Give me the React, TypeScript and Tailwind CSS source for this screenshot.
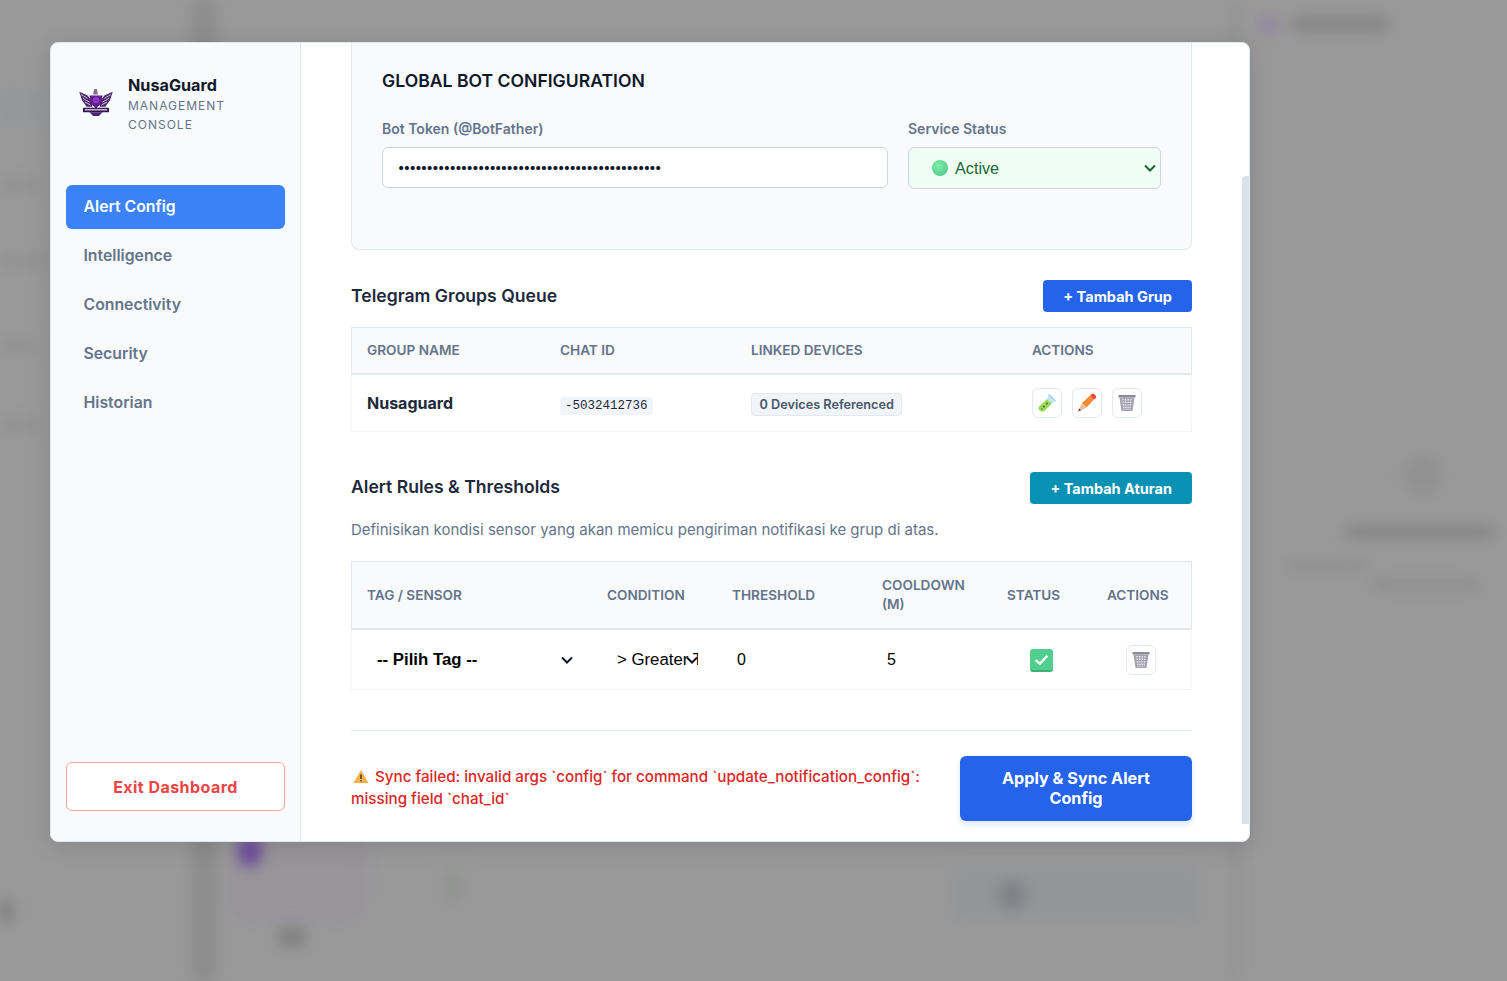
const navItems = ["Intelligence", "Connectivity", "Security", "Historian"];

function LogoMark() {
  return (
    <svg width="34" height="28" viewBox="0 0 36 30" className="shrink-0 blur-[0.3px]">
      <path d="M0 3 L9 7 L14 14 L14 19 L8 19 L3 12 Z" fill="#4a2a6b" />
      <path d="M36 3 L27 7 L22 14 L22 19 L28 19 L33 12 Z" fill="#4a2a6b" />
      <path d="M2 6 L9 10 M4 10 L11 14 M6 14 L12 17 M34 6 L27 10 M32 10 L25 14 M30 14 L24 17" stroke="#cfc4da" strokeWidth="1" />
      <path d="M16 0 L19 0 L20 6 L15 6 Z" fill="#7d708a" />
      <path d="M11 7 L25 7 L24 15 L18 21 L12 15 Z" fill="#5f1d8f" />
      <circle cx="18" cy="12" r="3.5" fill="#8a35c0" />
      <rect x="4" y="20" width="28" height="5" rx="1" fill="#35174f" />
      <rect x="6" y="21.5" width="24" height="1.5" fill="#cdbfdb" />
      <path d="M11 25 L25 25 L21 29 L15 29 Z" fill="#4b2070" />
    </svg>
  );
}

function TestTube() {
  return (
    <svg width="20" height="20" viewBox="0 0 20 20">
      <path d="M10 6 L15 10.5 L7.5 18 Q5 19.5 2.5 17.5 Q0.5 15 2.5 13 Z" fill="#9cd95c" />
      <path d="M10 6 L15 10.5 L17 9 L11.5 3.5 Z" fill="#bfe2f7" />
      <path d="M11 2.5 L12.5 1 L19 7.5 L17.5 9 Z" fill="#a6d4f2" />
      <circle cx="7" cy="13.5" r="1.1" fill="#3f7d2a" />
      <circle cx="10" cy="10.5" r="1.1" fill="#3f7d2a" />
      <circle cx="4.8" cy="16" r="0.8" fill="#3f7d2a" />
    </svg>
  );
}

function Pencil() {
  return (
    <svg width="20" height="20" viewBox="0 0 20 20">
      <path d="M5 10 L13 2.5 L17 6.5 L9.5 14.5 Z" fill="#f58a36" />
      <path d="M13 2.5 L15 1 Q16 0.5 17 1 L19 3 Q19.5 4 19 5 L17 6.5 Z" fill="#e8473f" />
      <path d="M5 10 L9.5 14.5 L3 18 L1.5 17 Z" fill="#ecc097" />
      <path d="M2.4 15.5 L4 17.3 L1 18.5 Z" fill="#5b3a2a" />
    </svg>
  );
}

function Wastebasket() {
  return (
    <svg width="18" height="18" viewBox="0 0 18 18">
      <rect x="0.5" y="1" width="17" height="2.5" fill="#8d8b96" />
      <path d="M1.5 3.5 L16.5 3.5 L14.5 17 L3.5 17 Z" fill="#a5a3b0" />
      <path d="M5 5 L6 16 M7.7 5 L8 16 M10.3 5 L10 16 M13 5 L12 16" stroke="#f0eef5" strokeWidth="1.3" strokeDasharray="1.4 1.2" />
    </svg>
  );
}

function Chevron({ className }: { className: string }) {
  return (
    <svg width="12" height="8" viewBox="0 0 12 8" className={className}>
      <path d="M1 1.5 L6 6.5 L11 1.5" fill="none" stroke="currentColor" strokeWidth="2" />
    </svg>
  );
}

function TrashButton() {
  return (
    <button className="flex h-[30px] w-[30px] items-center justify-center rounded-md border border-[#e2e8f0] bg-white">
      <Wastebasket />
    </button>
  );
}

export default function App() {
  return (
    <div className="relative h-[981px] w-full overflow-hidden bg-[#999999] font-['Inter',sans-serif]">
      {/* blurred dashboard behind the modal */}
      <div className="absolute inset-0 blur-[7px]">
        <div className="absolute left-[192px] top-0 h-full w-[24px] bg-[#8c8c8c]" />
        <div className="absolute left-[1232px] top-0 h-full w-[6px] bg-[#8f8f8f]" />
        <div className="absolute left-0 top-[90px] h-[30px] w-[45px] bg-[#94969a]" />
        <div className="absolute left-0 top-[180px] h-[12px] w-[40px] bg-[#919191]" />
        <div className="absolute left-0 top-[255px] h-[12px] w-[45px] bg-[#919191]" />
        <div className="absolute left-0 top-[340px] h-[12px] w-[35px] bg-[#919191]" />
        <div className="absolute left-0 top-[420px] h-[12px] w-[40px] bg-[#919191]" />
        <div className="absolute left-[1258px] top-[14px] h-[22px] w-[22px] rounded-full bg-[#938a9e]" />
        <div className="absolute left-[1292px] top-[18px] h-[12px] w-[98px] rounded bg-[#808280]" />
        <div className="absolute left-[1345px] top-[526px] h-[12px] w-[150px] rounded bg-[#838383]" />
        <div className="absolute left-[1285px] top-[561px] h-[10px] w-[85px] rounded bg-[#8f8f8f]" />
        <div className="absolute left-[1370px] top-[580px] h-[10px] w-[110px] rounded bg-[#8e8e8e]" />
        <div className="absolute left-[1403px] top-[455px] h-[40px] w-[40px] rounded-full bg-[#919191]" />
        <div className="absolute left-[233px] top-[835px] h-[82px] w-[130px] rounded-xl border-[3px] border-[#93899f] bg-[#979599]" />
        <div className="absolute left-[238px] top-[835px] h-[32px] w-[24px] rounded-full bg-[#6f4f9c]" />
        <div className="absolute left-[442px] top-[868px] h-[36px] w-[24px] rounded-t-full bg-[#929492]" />
        <div className="absolute left-[950px] top-[867px] h-[53px] w-[250px] rounded-lg bg-[#949597]" />
        <div className="absolute left-[1000px] top-[882px] h-[26px] w-[24px] rounded bg-[#7d8186]" />
        <div className="absolute left-[278px] top-[928px] h-[18px] w-[28px] rounded bg-[#7f7f7f]" />
        <div className="absolute left-0 top-[900px] h-[22px] w-[12px] rounded bg-[#7c7c7c]" />
      </div>

      <div className="relative pl-[50px] pt-[42px]">
        {/* modal */}
        <div className="relative flex h-[800px] w-[1200px] overflow-hidden rounded-lg border border-[#e2e8f0] bg-white shadow-[0_4px_24px_rgba(0,0,0,0.12)]">
          {/* sidebar */}
          <aside className="flex w-[250px] shrink-0 flex-col border-r border-[#e2e8f0] bg-[#f8fafc] px-[15px] pb-[30px] pt-[31px]">
            <div className="flex items-start gap-[15px] pl-[13px]">
              <div className="mt-[15px]">
                <LogoMark />
              </div>
              <div>
                <div className="text-[16.2px] font-bold leading-[22px] text-[#0f172a]">NusaGuard</div>
                <div className="text-[12px] leading-[19px] tracking-[1px] text-[#64748b]">
                  MANAGEMENT
                  <br />
                  CONSOLE
                </div>
              </div>
            </div>
            <nav className="mt-[51px] flex flex-col gap-[5px]">
              <div className="flex h-[44px] items-center rounded-md bg-[#3b82f6] px-[17.5px] pb-[1px] text-[15.8px] font-semibold text-white">Alert Config</div>
              {navItems.map((item) => (
                <div key={item} className="flex h-[44px] items-center rounded-md px-[17.5px] pb-[1px] text-[15.8px] font-semibold text-[#64748b]">
                  {item}
                </div>
              ))}
            </nav>
            <button className="mt-auto h-[49px] rounded-md border border-[#fca5a5] bg-white pt-[1px] text-[16px] font-bold tracking-[0.45px] text-[#ef4444]">
              Exit Dashboard
            </button>
          </aside>

          {/* main column, scrolled a little */}
          <main className="min-w-0 flex-1 overflow-hidden pl-[50px] pr-[57px]">
            <section className="h-[207px] rounded-b-lg border-x border-b border-[#e2e8f0] bg-[#f8fafc] px-[30px] pt-[27px]">
              <h2 className="text-[17.6px] font-semibold leading-[22px] text-[#0f172a]">GLOBAL BOT CONFIGURATION</h2>
              <div className="mt-[28px] grid grid-cols-[506px_253px] gap-[20px]">
                <div>
                  <label className="block text-[14px] font-semibold leading-[18px] text-[#64748b]">Bot Token (@BotFather)</label>
                  <input
                    type="password"
                    readOnly
                    value="1234567890123456789012345678901234567890123456"
                    className="mt-[9px] h-[41px] w-full rounded-md border border-[#cbd5e1] bg-white px-[14.5px] pb-[2px] text-[13px] tracking-[-1.6px] text-[#0f172a] outline-none"
                  />
                </div>
                <div>
                  <label className="block text-[14px] font-semibold leading-[18px] text-[#64748b]">Service Status</label>
                  <div className="relative mt-[9px]">
                    <div className="absolute left-[24px] top-[13px] h-[16px] w-[16px] rounded-full bg-[radial-gradient(circle_at_40%_35%,#7cf0a6,#4bbd8a)]" />
                    <select className="h-[42px] w-full appearance-none rounded-md border border-[#cbd5e1] bg-[#f0fdf4] pl-[46px] pr-[8px] font-['Liberation_Sans',sans-serif] text-[16.2px] text-[#166534] outline-none">
                      <option>Active</option>
                    </select>
                    <Chevron className="pointer-events-none absolute right-[5px] top-[17px] text-[#166534]" />
                  </div>
                </div>
              </div>
            </section>

            <div className="mt-[30px] flex h-[32px] items-center justify-between">
              <h3 className="text-[17.6px] font-semibold text-[#1e293b]">Telegram Groups Queue</h3>
              <button className="h-[32px] rounded bg-[#2563eb] px-[20px] pt-[1px] text-[14.5px] font-bold text-white">+ Tambah Grup</button>
            </div>

            <div className="mt-[15px]">
              <div className="grid h-[48px] grid-cols-[193px_191px_281px_1fr] items-center border border-b-2 border-[#e2e8f0] bg-[#f8fafc] pl-[15px] text-[13.6px] font-semibold text-[#64748b]">
                <div>GROUP NAME</div>
                <div>CHAT ID</div>
                <div>LINKED DEVICES</div>
                <div>ACTIONS</div>
              </div>
              <div className="grid h-[57px] grid-cols-[193px_191px_281px_1fr] items-center border-x border-b border-[#f1f5f9] pl-[15px]">
                <div className="text-[16px] font-bold text-[#1e293b]">Nusaguard</div>
                <div>
                  <span className="rounded bg-[#f1f5f9] px-[5px] py-[2px] font-['Liberation_Mono',monospace] text-[12.5px] text-[#1e293b]">-5032412736</span>
                </div>
                <div>
                  <span className="rounded border border-[#e2e8f0] bg-[#f1f5f9] px-[7.5px] py-[3px] text-[12.7px] font-semibold text-[#475569]">0 Devices Referenced</span>
                </div>
                <div className="flex gap-[10px]">
                  <button className="flex h-[30px] w-[30px] items-center justify-center rounded-md border border-[#e2e8f0] bg-white">
                    <TestTube />
                  </button>
                  <button className="flex h-[30px] w-[30px] items-center justify-center rounded-md border border-[#e2e8f0] bg-white">
                    <Pencil />
                  </button>
                  <TrashButton />
                </div>
              </div>
            </div>

            <div className="mt-[40px] flex h-[32px] items-center justify-between">
              <h3 className="pb-[2px] text-[17.6px] font-semibold text-[#1e293b]">Alert Rules &amp; Thresholds</h3>
              <button className="h-[32px] rounded bg-[#0891b2] px-[20px] pt-[1px] text-[14.5px] font-bold text-white">+ Tambah Aturan</button>
            </div>
            <p className="mt-[15px] text-[15px] leading-[22px] text-[#64748b]">Definisikan kondisi sensor yang akan memicu pengiriman notifikasi ke grup di atas.</p>

            <div className="mt-[20px]">
              <div className="grid h-[69px] grid-cols-[240px_125px_150px_125px_100px_1fr] items-center border border-b-2 border-[#e2e8f0] bg-[#f8fafc] pl-[15px] text-[13.6px] font-semibold leading-[19px] text-[#64748b]">
                <div>TAG / SENSOR</div>
                <div>CONDITION</div>
                <div>THRESHOLD</div>
                <div>
                  COOLDOWN
                  <br />
                  (M)
                </div>
                <div>STATUS</div>
                <div>ACTIONS</div>
              </div>
              <div className="grid h-[60px] grid-cols-[240px_125px_150px_125px_100px_1fr] items-center border-x border-b border-[#f1f5f9] pl-[15px]">
                <div className="relative pr-[28px]">
                  <select className="h-[40px] w-full appearance-none bg-transparent pl-[10px] font-['Liberation_Sans',sans-serif] text-[16.8px] font-bold text-black outline-none">
                    <option>-- Pilih Tag --</option>
                  </select>
                  <Chevron className="pointer-events-none absolute left-[194px] top-[16px] text-[#111827]" />
                </div>
                <div className="relative pr-[34px]">
                  <select className="h-[40px] w-full appearance-none bg-transparent pl-[10px] font-['Liberation_Sans',sans-serif] text-[16.8px] text-black outline-none">
                    <option>&gt; Greater Than</option>
                  </select>
                  <Chevron className="pointer-events-none absolute left-[79px] top-[16px] text-[#111827]" />
                </div>
                <div className="pl-[5px] font-['Liberation_Sans',sans-serif] text-[16px] text-black">0</div>
                <div className="pl-[5px] font-['Liberation_Sans',sans-serif] text-[16px] text-black">5</div>
                <div className="pl-[23px]">
                  <div className="mt-[1px] flex h-[23px] w-[23px] items-center justify-center rounded-[3px] border-b-2 border-[#3fb279] bg-[#52cf8f]">
                    <svg width="17" height="17" viewBox="0 0 16 16">
                      <path d="M2.5 8.5 L6.5 12 L13.5 4.5" fill="none" stroke="#fff" strokeWidth="2.2" />
                    </svg>
                  </div>
                </div>
                <div className="pl-[19px]">
                  <TrashButton />
                </div>
              </div>
            </div>

            <div className="mt-[40px] flex items-start justify-between border-t border-[#e2e8f0] pt-[25px]">
              <p className="w-[590px] pt-[10px] text-[15.2px] font-medium leading-[22px] text-[#dc2626]">
                <svg width="16" height="15" viewBox="0 0 16 15" className="mr-[6px] ml-[2px] inline-block align-[-2px]">
                  <path d="M8 1 L15.5 14 L0.5 14 Z" fill="#f5b04a" />
                  <path d="M8 5.5 L8 10 M8 11.2 L8 12.6" stroke="#333" strokeWidth="1.4" />
                </svg>
                Sync failed: invalid args `config` for command `update_notification_config`: missing field `chat_id`
              </p>
              <button className="h-[65px] w-[232px] rounded-md bg-[#2563eb] px-[30px] pb-[2px] text-[16.2px] font-bold leading-[20px] text-white shadow-[0_4px_6px_rgba(37,99,235,0.15)]">
                Apply &amp; Sync Alert Config
              </button>
            </div>
          </main>

          {/* scrollbar thumb */}
          <div className="absolute right-0 top-[133px] h-[648px] w-[7px] rounded-tl bg-[#dbe2ea]" />
        </div>
      </div>
    </div>
  );
}
